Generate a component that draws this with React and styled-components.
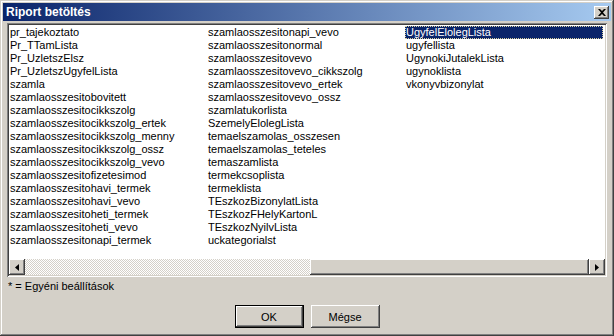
import React from "react";
import styled, { createGlobalStyle, css } from "styled-components";

const GlobalStyle = createGlobalStyle`
  html, body { margin: 0; padding: 0; background: #d4d0c8; }
  * { box-sizing: border-box; }
`;

const FONT = `"Liberation Sans", Arial, sans-serif`;

const raised = css`
  background: #d4d0c8;
  box-shadow: inset -1px -1px #404040, inset 1px 1px #ffffff,
    inset -2px -2px #808080, inset 2px 2px #d4d0c8;
`;

const Window = styled.div`
  width: 614px;
  height: 336px;
  background: #d4d0c8;
  padding: 3px;
  display: flex;
  flex-direction: column;
  font-family: ${FONT};
  box-shadow: inset -1px -1px #404040, inset 1px 1px #d4d0c8,
    inset -2px -2px #808080, inset 2px 2px #ffffff;
`;

const TitleBar = styled.div`
  height: 18px;
  display: flex;
  align-items: center;
  justify-content: space-between;
  padding: 0 2px 0 3px;
  background: linear-gradient(to right, #0a246a, #a6caf0);
`;

const Title = styled.span`
  color: #fff;
  font-weight: bold;
  font-size: 12px;
`;

const CloseButton = styled.div`
  ${raised};
  width: 15px;
  height: 13px;
  display: flex;
  align-items: center;
  justify-content: center;
`;

const Body = styled.div`
  flex: 1;
  display: flex;
  flex-direction: column;
  padding: 2px 4px 0 4px;
`;

const ListBox = styled.div`
  height: 254px;
  padding: 2px;
  background: #fff;
  display: flex;
  flex-direction: column;
  box-shadow: inset 1px 1px #808080, inset -1px -1px #ffffff,
    inset 2px 2px #404040, inset -2px -2px #d4d0c8;
`;

const Columns = styled.div`
  flex: 1;
  display: flex;
  padding-top: 1px;
  overflow: hidden;
`;

const Column = styled.div`
  width: 198px;
  display: flex;
  flex-direction: column;
`;

const Item = styled.div`
  height: 13px;
  line-height: 13px;
  font-size: 11px;
  padding-left: 1px;
  white-space: nowrap;
  color: #000;
  ${(p) =>
    p.$selected &&
    css`
      background: #0a246a;
      color: #fff;
      outline: 1px dotted #d8d0a0;
      outline-offset: -1px;
    `}
`;

const ScrollBar = styled.div`
  height: 16px;
  display: flex;
`;

const ArrowButton = styled.div`
  ${raised};
  width: 16px;
  height: 16px;
  display: flex;
  align-items: center;
  justify-content: center;
`;

const Track = styled.div`
  flex: 1;
  display: flex;
  justify-content: flex-end;
  background-image: repeating-conic-gradient(#ffffff 0 25%, #d4d0c8 0 50%);
  background-size: 2px 2px;
`;

const Thumb = styled.div`
  ${raised};
  height: 16px;
`;

const Note = styled.div`
  margin-top: 3px;
  height: 13px;
  line-height: 13px;
  font-size: 11px;
  padding-left: 1px;
  color: #000;
`;

const ButtonRow = styled.div`
  margin-top: 12px;
  display: flex;
  justify-content: center;
  gap: 7px;
`;

const Button = styled.div`
  width: 69px;
  height: 23px;
  display: flex;
  align-items: center;
  justify-content: center;
  font-size: 11px;
  color: #000;
  background: #d4d0c8;
  box-shadow: inset -1px -1px #404040, inset 1px 1px #ffffff,
    inset -2px -2px #808080, inset 2px 2px #d4d0c8;
  ${(p) =>
    p.$default &&
    css`
      box-shadow: inset 0 0 0 1px #000, inset -2px -2px #404040,
        inset 2px 2px #ffffff, inset -3px -3px #808080;
    `}
`;

const columns = [
  [
    "pr_tajekoztato",
    "Pr_TTamLista",
    "Pr_UzletszElsz",
    "Pr_UzletszUgyfelLista",
    "szamla",
    "szamlaosszesitobovitett",
    "szamlaosszesitocikkszolg",
    "szamlaosszesitocikkszolg_ertek",
    "szamlaosszesitocikkszolg_menny",
    "szamlaosszesitocikkszolg_ossz",
    "szamlaosszesitocikkszolg_vevo",
    "szamlaosszesitofizetesimod",
    "szamlaosszesitohavi_termek",
    "szamlaosszesitohavi_vevo",
    "szamlaosszesitoheti_termek",
    "szamlaosszesitoheti_vevo",
    "szamlaosszesitonapi_termek",
  ],
  [
    "szamlaosszesitonapi_vevo",
    "szamlaosszesitonormal",
    "szamlaosszesitovevo",
    "szamlaosszesitovevo_cikkszolg",
    "szamlaosszesitovevo_ertek",
    "szamlaosszesitovevo_ossz",
    "szamlatukorlista",
    "SzemelyElolegLista",
    "temaelszamolas_osszesen",
    "temaelszamolas_teteles",
    "temaszamlista",
    "termekcsoplista",
    "termeklista",
    "TEszkozBizonylatLista",
    "TEszkozFHelyKartonL",
    "TEszkozNyilvLista",
    "uckategorialst",
  ],
  ["UgyfelElolegLista", "ugyfellista", "UgynokiJutalekLista", "ugynoklista", "vkonyvbizonylat"],
];

export default function App() {
  return (
    <>
      <GlobalStyle />
      <Window>
        <TitleBar>
          <Title>Riport betöltés</Title>
          <CloseButton>
            <svg width="8" height="7" viewBox="0 0 8 7">
              <path d="M0 0h2l2 2 2-2h2L5 3.5 8 7H6L4 5 2 7H0l3-3.5z" fill="#000" />
            </svg>
          </CloseButton>
        </TitleBar>
        <Body>
          <ListBox>
            <Columns>
              {columns.map((col, ci) => (
                <Column key={ci}>
                  {col.map((name, i) => (
                    <Item key={name} $selected={ci === 2 && i === 0}>
                      {name}
                    </Item>
                  ))}
                </Column>
              ))}
            </Columns>
            <ScrollBar>
              <ArrowButton>
                <svg width="4" height="7" viewBox="0 0 4 7">
                  <path d="M4 0v7L0 3.5z" fill="#000" />
                </svg>
              </ArrowButton>
              <Track>
                <Thumb style={{ width: "279px" }} />
              </Track>
              <ArrowButton>
                <svg width="4" height="7" viewBox="0 0 4 7">
                  <path d="M0 0v7l4-3.5z" fill="#000" />
                </svg>
              </ArrowButton>
            </ScrollBar>
          </ListBox>
          <Note>* = Egyéni beállítások</Note>
          <ButtonRow>
            <Button $default>OK</Button>
            <Button>Mégse</Button>
          </ButtonRow>
        </Body>
      </Window>
    </>
  );
}
